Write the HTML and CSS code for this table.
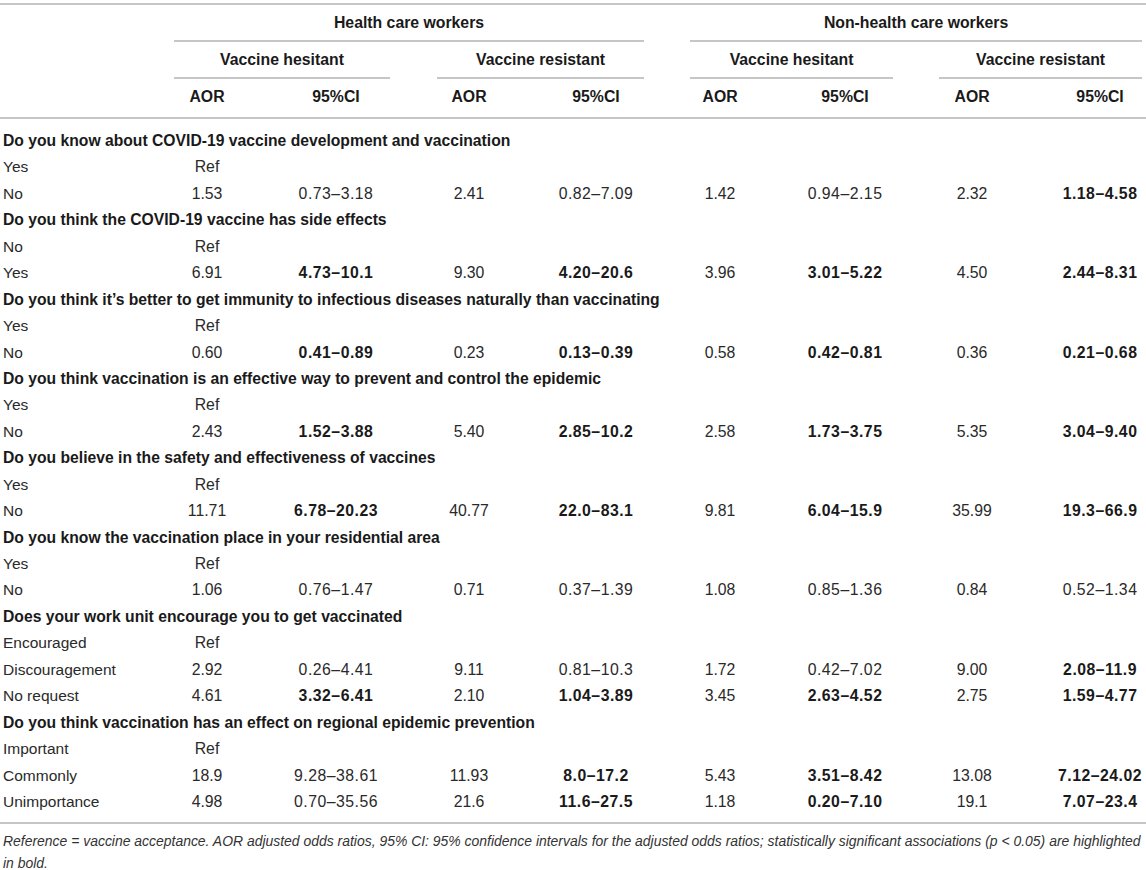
FILE: index.html
```html
<!DOCTYPE html>
<html lang="en">
<head>
<meta charset="utf-8">
<title>Table</title>
<link rel="stylesheet" href="styles.css">
</head>
<body>
<div class="wrap">
<table class="t">
  <colgroup>
    <col class="w-lab"><col class="w-a1"><col class="w-c1"><col class="w-a2"><col class="w-c2"><col class="w-a3"><col class="w-c3"><col class="w-a4"><col class="w-c4">
  </colgroup>
  <thead>
    <tr class="r1">
      <th class="lab" rowspan="3"></th>
      <th colspan="4" class="g1"><div class="ul">Health care workers</div></th>
      <th colspan="4" class="g2"><div class="ul">Non-health care workers</div></th>
    </tr>
    <tr class="r2">
      <th colspan="2" class="s1"><div class="ul">Vaccine hesitant</div></th>
      <th colspan="2" class="s2"><div class="ul">Vaccine resistant</div></th>
      <th colspan="2" class="s3"><div class="ul">Vaccine hesitant</div></th>
      <th colspan="2" class="s4"><div class="ul">Vaccine resistant</div></th>
    </tr>
    <tr class="r3">
      <th>AOR</th><th>95%CI</th><th>AOR</th><th>95%CI</th><th>AOR</th><th>95%CI</th><th>AOR</th><th class="last">95%CI</th>
    </tr>
  </thead>
  <tbody>
    <tr class="q first"><td colspan="9">Do you know about COVID-19 vaccine development and vaccination</td></tr>
    <tr><td>Yes</td><td>Ref</td><td></td><td></td><td></td><td></td><td></td><td></td><td class="last"></td></tr>
    <tr><td>No</td><td>1.53</td><td class="ci">0.73–3.18</td><td>2.41</td><td class="ci">0.82–7.09</td><td>1.42</td><td class="ci">0.94–2.15</td><td>2.32</td><td class="ci last b">1.18–4.58</td></tr>

    <tr class="q"><td colspan="9">Do you think the COVID-19 vaccine has side effects</td></tr>
    <tr><td>No</td><td>Ref</td><td></td><td></td><td></td><td></td><td></td><td></td><td class="last"></td></tr>
    <tr><td>Yes</td><td>6.91</td><td class="ci b">4.73–10.1</td><td>9.30</td><td class="ci b">4.20–20.6</td><td>3.96</td><td class="ci b">3.01–5.22</td><td>4.50</td><td class="ci last b">2.44–8.31</td></tr>

    <tr class="q"><td colspan="9">Do you think it’s better to get immunity to infectious diseases naturally than vaccinating</td></tr>
    <tr><td>Yes</td><td>Ref</td><td></td><td></td><td></td><td></td><td></td><td></td><td class="last"></td></tr>
    <tr><td>No</td><td>0.60</td><td class="ci b">0.41–0.89</td><td>0.23</td><td class="ci b">0.13–0.39</td><td>0.58</td><td class="ci b">0.42–0.81</td><td>0.36</td><td class="ci last b">0.21–0.68</td></tr>

    <tr class="q"><td colspan="9">Do you think vaccination is an effective way to prevent and control the epidemic</td></tr>
    <tr><td>Yes</td><td>Ref</td><td></td><td></td><td></td><td></td><td></td><td></td><td class="last"></td></tr>
    <tr><td>No</td><td>2.43</td><td class="ci b">1.52–3.88</td><td>5.40</td><td class="ci b">2.85–10.2</td><td>2.58</td><td class="ci b">1.73–3.75</td><td>5.35</td><td class="ci last b">3.04–9.40</td></tr>

    <tr class="q"><td colspan="9">Do you believe in the safety and effectiveness of vaccines</td></tr>
    <tr><td>Yes</td><td>Ref</td><td></td><td></td><td></td><td></td><td></td><td></td><td class="last"></td></tr>
    <tr><td>No</td><td>11.71</td><td class="ci b">6.78–20.23</td><td>40.77</td><td class="ci b">22.0–83.1</td><td>9.81</td><td class="ci b">6.04–15.9</td><td>35.99</td><td class="ci last b">19.3–66.9</td></tr>

    <tr class="q"><td colspan="9">Do you know the vaccination place in your residential area</td></tr>
    <tr><td>Yes</td><td>Ref</td><td></td><td></td><td></td><td></td><td></td><td></td><td class="last"></td></tr>
    <tr><td>No</td><td>1.06</td><td class="ci">0.76–1.47</td><td>0.71</td><td class="ci">0.37–1.39</td><td>1.08</td><td class="ci">0.85–1.36</td><td>0.84</td><td class="ci last">0.52–1.34</td></tr>

    <tr class="q"><td colspan="9">Does your work unit encourage you to get vaccinated</td></tr>
    <tr><td>Encouraged</td><td>Ref</td><td></td><td></td><td></td><td></td><td></td><td></td><td class="last"></td></tr>
    <tr><td>Discouragement</td><td>2.92</td><td class="ci">0.26–4.41</td><td>9.11</td><td class="ci">0.81–10.3</td><td>1.72</td><td class="ci">0.42–7.02</td><td>9.00</td><td class="ci last b">2.08–11.9</td></tr>
    <tr><td>No request</td><td>4.61</td><td class="ci b">3.32–6.41</td><td>2.10</td><td class="ci b">1.04–3.89</td><td>3.45</td><td class="ci b">2.63–4.52</td><td>2.75</td><td class="ci last b">1.59–4.77</td></tr>

    <tr class="q"><td colspan="9">Do you think vaccination has an effect on regional epidemic prevention</td></tr>
    <tr><td>Important</td><td>Ref</td><td></td><td></td><td></td><td></td><td></td><td></td><td class="last"></td></tr>
    <tr><td>Commonly</td><td>18.9</td><td class="ci">9.28–38.61</td><td>11.93</td><td class="ci b">8.0–17.2</td><td>5.43</td><td class="ci b">3.51–8.42</td><td>13.08</td><td class="ci last b">7.12–24.02</td></tr>
    <tr class="end"><td>Unimportance</td><td>4.98</td><td class="ci">0.70–35.56</td><td>21.6</td><td class="ci b">11.6–27.5</td><td>1.18</td><td class="ci b">0.20–7.10</td><td>19.1</td><td class="ci last b">7.07–23.4</td></tr>
  </tbody>
</table>
<p class="note">Reference = vaccine acceptance. AOR adjusted odds ratios, 95% CI: 95% confidence intervals for the adjusted odds ratios; statistically significant associations (p &lt; 0.05) are highlighted in bold.</p>
</div>
</body>
</html>
```

FILE: styles.css
```css
html, body {
  margin: 0;
  padding: 0;
  background: #ffffff;
}
body {
  font-family: "Liberation Sans", Arial, Helvetica, sans-serif;
  font-size: 15.8px;
  color: #1e1e1e;
}
.wrap {
  width: 1146px;
  padding-top: 3px;
}
.t {
  width: 1146px;
  table-layout: fixed;
  border-collapse: collapse;
  border-top: 2px solid #c6c6c6;
  border-bottom: 2px solid #c6c6c6;
}
.w-lab { width: 174px; }
.w-a1 { width: 66px; }
.w-c1 { width: 192px; }
.w-a2 { width: 74px; }
.w-c2 { width: 180px; }
.w-a3 { width: 68px; }
.w-c3 { width: 182px; }
.w-a4 { width: 72px; }
.w-c4 { width: 138px; }

th {
  font-weight: bold;
  color: #1a1a1a;
  padding: 0;
  text-align: center;
  vertical-align: top;
}
.ul {
  height: 35px;
  line-height: 35px;
  border-bottom: 2px solid #c6c6c6;
  white-space: nowrap;
}
.g1 { padding-right: 42px; }
.g2 { padding-left: 4px; padding-right: 4px; }
.s1 { padding-right: 42px; }
.s2 { padding-left: 5px; padding-right: 42px; }
.s3 { padding-left: 4px; padding-right: 43px; }
.s4 { padding-left: 3px; padding-right: 4px; }

.r3 th {
  line-height: 20px;
  padding-top: 8px;
  padding-bottom: 10px;
  border-bottom: 2px solid #c6c6c6;
}
.lab {
  border-bottom: 2px solid #c6c6c6;
}
.r3 th.last { padding-left: 46px; }

td {
  line-height: 20px;
  height: 20px;
  padding: 3.22px 0;
  text-align: center;
  white-space: nowrap;
  color: #2a2a2a;
}
td:first-child {
  text-align: left;
  padding-left: 3px;
  font-size: 15.5px;
}
td.ci { letter-spacing: 0.5px; }
td.last { padding-left: 46px; }
td.b {
  font-weight: bold;
  color: #1a1a1a;
}
.q td {
  font-weight: bold;
  color: #1a1a1a;
  text-align: left;
  font-size: 15.7px;
}
.first td { padding-top: 12px; }
.end td { padding-bottom: 10px; }

.note {
  margin: 6px 0 0 0;
  padding: 0 0 0 3px;
  font-style: italic;
  font-size: 13.95px;
  line-height: 22px;
  color: #333333;
}
```
